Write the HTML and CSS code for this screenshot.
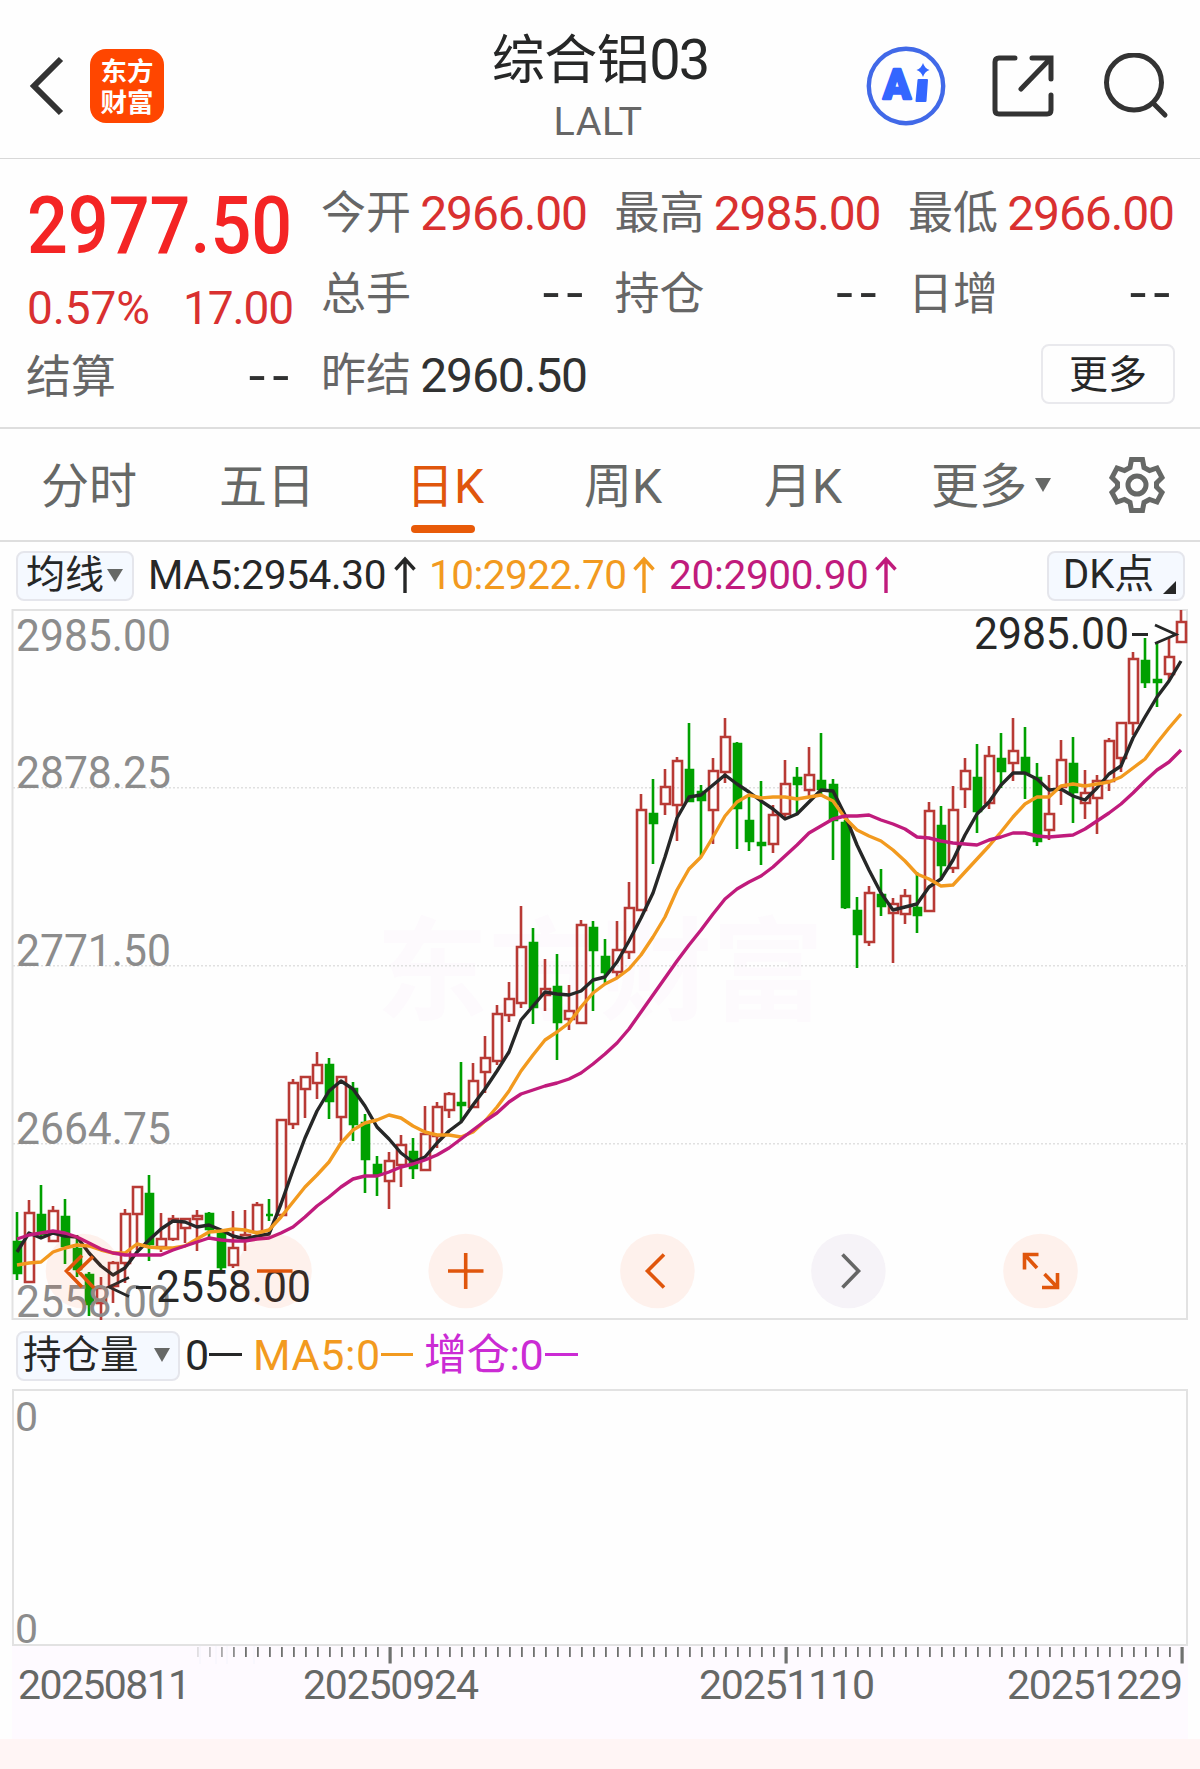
FILE: index.html
```html
<!DOCTYPE html>
<html lang="zh-CN">
<head>
<meta charset="utf-8">
<title>综合铝03</title>
<link rel="stylesheet" href="styles.css">
</head>
<body>
<header class="header">
  <div class="header-left">
    <svg class="back" width="40" height="66" viewBox="0 0 40 66"><path d="M35 6 8 33 35 60"/></svg>
    <div class="logo"><span>东方</span><span>财富</span></div>
  </div>
  <div class="title">
    <h1>综合铝<span class="num">03</span></h1>
    <p>LALT</p>
  </div>
  <div class="header-right">
    <svg class="ai" width="80" height="80" viewBox="0 0 80 80">
      <circle cx="40" cy="40" r="37.2"/>
      <text x="17" y="53" textLength="28" lengthAdjust="spacingAndGlyphs">A</text>
      <path d="M52.500 34H61L59.500 55H50.500Z"/>
      <path class="spark" d="M57 17Q58.700 22.300 63.500 24Q58.700 25.700 57 31Q55.300 25.700 50.500 24Q55.300 22.300 57 17Z"/>
    </svg>
    <svg class="line-icon" width="64" height="64" viewBox="0 0 64 64"><path d="M24 4H8Q4 4 4 8V56Q4 60 8 60H56Q60 60 60 56V41M41 4H60V25M59 5 30 35"/></svg>
    <svg class="line-icon" width="66" height="66" viewBox="0 0 66 66"><circle cx="30" cy="29.500" r="27.500"/><path d="M49 50 61 62"/></svg>
  </div>
</header>

<section class="quote">
  <div class="price">
    <strong>2977.50</strong>
    <div class="change"><span class="pct">0.57%</span><span>17.00</span></div>
    <div class="cell"><label>结算</label><i>--</i></div>
  </div>
  <div class="facts">
    <div class="cell"><label>今开</label><b>2966.00</b></div>
    <div class="cell"><label>最高</label><b>2985.00</b></div>
    <div class="cell"><label>最低</label><b>2966.00</b></div>
    <div class="cell"><label>总手</label><i>--</i></div>
    <div class="cell"><label>持仓</label><i>--</i></div>
    <div class="cell"><label>日增</label><i>--</i></div>
    <div class="cell"><label>昨结</label><b class="dark">2960.50</b></div>
    <button class="more">更多</button>
  </div>
</section>

<nav class="tabs">
  <span class="tab t1">分时</span>
  <span class="tab t2">五日</span>
  <span class="tab t3 active">日K</span>
  <span class="tab t4">周K</span>
  <span class="tab t5">月K</span>
  <span class="tab t6">更多<svg width="16" height="14" viewBox="0 0 16 14"><path d="M0 0H16L8 14Z"/></svg></span>
  <svg class="gear" width="58" height="58" viewBox="0 0 58 58">
    <path d="M23.500 3.500H34.500L36 11.500L41.500 14.500L49 12L54 21.500L48.500 27V31L54 36.500L49 46L41.500 43.500L36 46.500L34.500 54.500H23.500L22 46.500L16.500 43.500L9 46L4 36.500L9.500 31V27L4 21.500L9 12L16.500 14.500L22 11.500Z"/>
    <circle cx="29" cy="29" r="9"/>
  </svg>
</nav>

<div class="legend ma">
  <span class="chip chip-ma">均线<svg width="16" height="13" viewBox="0 0 16 13"><path d="M0 0H16L8 13Z"/></svg></span>
  <span class="m m5">MA5:2954.30<svg class="up" width="22" height="38" viewBox="0 0 22 38"><path d="M11 37V3M1.500 13.500 11 3 20.500 13.500"/></svg></span>
  <span class="m m10">10:2922.70<svg class="up" width="22" height="38" viewBox="0 0 22 38"><path d="M11 37V3M1.500 13.500 11 3 20.500 13.500"/></svg></span>
  <span class="m m20">20:2900.90<svg class="up" width="22" height="38" viewBox="0 0 22 38"><path d="M11 37V3M1.500 13.500 11 3 20.500 13.500"/></svg></span>
  <span class="chip chip-dk">DK点<svg width="13" height="13" viewBox="0 0 13 13"><path d="M13 0V13H0Z"/></svg></span>
</div>

<svg class="chart" id="kline" width="1200" height="711" viewBox="0 609 1200 711">
  <text class="watermark" x="376" y="1012" textLength="448">东方财富</text>
  <path class="grid" d="M13 787.700H1187M13 965.700H1187M13 1143.700H1187"/>
  <path class="frame" d="M12.500 610H1187V1319H12.500Z"/>
  <g id="candles"></g>
  <g class="scale">
    <text x="16" y="651" textLength="155" lengthAdjust="spacingAndGlyphs">2985.00</text>
    <text x="16" y="788" textLength="155" lengthAdjust="spacingAndGlyphs">2878.25</text>
    <text x="16" y="966" textLength="155" lengthAdjust="spacingAndGlyphs">2771.50</text>
    <text x="16" y="1144" textLength="155" lengthAdjust="spacingAndGlyphs">2664.75</text>
    <text x="16" y="1317" textLength="155" lengthAdjust="spacingAndGlyphs">2558.00</text>
  </g>
  <g id="averages"></g>
  <g class="mark">
    <text x="974" y="648.500" textLength="155" lengthAdjust="spacingAndGlyphs">2985.00</text>
    <path d="M1132 634.500H1148M1155 625 1176 634.500 1155 643.500"/>
    <text x="156" y="1301.500" textLength="155" lengthAdjust="spacingAndGlyphs">2558.00</text>
    <path d="M136 1287.500H151M129 1277.500 109 1287 129 1296.500"/>
  </g>
  <g class="controls">
    <circle cx="83" cy="1271" r="37.300"/><circle cx="274.500" cy="1271" r="37.300"/><circle cx="465.700" cy="1271" r="37.300"/>
    <circle cx="657.400" cy="1271" r="37.300"/><circle class="off" cx="848.400" cy="1271" r="37.300"/><circle cx="1040.500" cy="1271" r="37.300"/>
    <path d="M82 1255.500 66.500 1271 82 1287M93 1256.500 78 1271 94 1288M257 1271H292.500M448 1271H483.500M465.700 1253V1289M664 1254.500 647.500 1271 664 1287.500"/>
    <path class="off" d="M842.500 1254.500 858.500 1271 842.500 1287.500"/>
    <path d="M1038.500 1254.500H1024.500V1269.500M1025 1255 1037 1268M1042 1287.500H1057.500V1273M1057 1287 1044.500 1274"/>
  </g>
</svg>

<div class="legend pos">
  <span class="chip chip-pos">持仓量<svg width="16" height="14" viewBox="0 0 16 14"><path d="M0 0H16L8 14Z"/></svg></span>
  <span class="p p0">0<s></s></span>
  <span class="p p5">MA5:0<s></s></span>
  <span class="p pz">增仓:0<s></s></span>
</div>

<div class="volume"><span>0</span><span>0</span></div>

<div class="axis">
  <svg class="ticks" id="ticks" width="1176" height="18" viewBox="12 1646 1176 18"></svg>
  <div class="dates"><span>20250811</span><span>20250924</span><span>20251110</span><span>20251229</span></div>
</div>
<script src="chart.js"></script>
</body>
</html>
```
FILE: styles.css
```css
* { box-sizing: border-box; }
body {
  margin: 0;
  width: 1200px;
  height: 1769px;
  overflow: hidden;
  display: flex;
  flex-direction: column;
  background: #fff5f5;
  color: #262727;
  font-family: Roboto, "Noto Sans CJK SC", sans-serif;
}
body > * { flex: none; background: #fefefe; }
svg { display: block; fill: none; }
h1, p { margin: 0; font-weight: 400; }

.header {
  height: 159px;
  border-bottom: 1px solid #d8d8d8;
  display: grid;
  grid-template-columns: 400px 1fr 400px;
}
.header-left { display: flex; align-items: center; padding: 14px 0 0 26px; }
.back path { stroke: #333; stroke-width: 6; }
.logo {
  margin-left: 24px;
  width: 74px;
  height: 74px;
  border-radius: 16px;
  background: #ff4600;
  color: #fff;
  font: 700 26.5px/31px "Noto Sans CJK SC", sans-serif;
  text-align: center;
  padding-top: 5px;
  display: flex;
  flex-direction: column;
}
.title { text-align: center; }
h1 { font-size: 53px; line-height: 72px; padding-top: 24px; letter-spacing: -0.5px; }
h1 .num { font-size: 56px; letter-spacing: -2px; }
.title p { font-size: 39.5px; line-height: 46px; margin-top: 2px; color: #666; letter-spacing: 0.5px; padding-right: 4px; }
.header-right { display: flex; align-items: center; padding: 14px 0 0 66px; }
.ai circle { stroke: #4169e8; stroke-width: 4.4; }
.ai text { font: 900 43px Roboto, sans-serif; fill: #3366ff; stroke: #3366ff; stroke-width: 2.4; stroke-linejoin: round; }
.ai path { fill: #3366ff; stroke: #3366ff; stroke-width: 2; stroke-linejoin: round; }
.ai .spark { stroke-width: 0; }
.line-icon path, .line-icon circle { stroke: #333; stroke-width: 5; stroke-linecap: round; }
.line-icon { margin-left: 45px; }
.line-icon + .line-icon { margin-left: 49px; }

.quote { height: 270px; border-bottom: 2px solid #dedede; display: flex; padding-top: 13px; }
.price { width: 322px; padding: 0 32px 0 27px; }
.price strong {
  display: block;
  font-size: 79px;
  font-weight: 500;
  line-height: 108px;
  color: #f42424;
  transform: scaleX(0.91);
  transform-origin: 0 50%;
}
.change { display: flex; justify-content: space-between; font-size: 46px; line-height: 56px; color: #d93030; letter-spacing: -1.1px; }
.change span { margin-right: -1px; }
.change .pct { letter-spacing: -0.1px; }
.price .cell { height: 80px; }
.facts {
  width: 851px;
  display: grid;
  grid-template-columns: repeat(3, 264px);
  grid-auto-rows: 81px;
  column-gap: 29.5px;
}
.cell { display: flex; justify-content: space-between; align-items: center; line-height: 60px; padding-top: 2px; }
.cell label { font-size: 45px; color: #666; padding-top: 1px; margin-left: -1px; }
.cell b { font-size: 48px; font-weight: 400; color: #d93030; letter-spacing: -1.1px; margin-right: -1px; }
.cell .dark { color: #303131; }
.cell i { font: 56px/48px "Noto Sans CJK SC", sans-serif; letter-spacing: 4.5px; margin: -15px -3px 0 0; color: #303131; }
.price .cell, .price .change { width: 265px; }
.more {
  grid-column: 3;
  justify-self: end;
  margin: 10px -2px 0 0;
  width: 134px;
  height: 60px;
  border: 2px solid #e9e9ed;
  border-radius: 8px;
  background: #fefefe;
  color: #262727;
  font: 39px/50px "Noto Sans CJK SC", sans-serif;
  padding: 0 0 7px;
}

.tabs { height: 113px; border-bottom: 2px solid #dedede; display: flex; padding-left: 41px; color: #666866; }
.tab { font-size: 48px; line-height: 116px; height: 104px; white-space: nowrap; display: flex; }
.t1, .t2 { width: 178px; }
.t3 { width: 64px; margin-left: 14px; margin-right: 109px; flex-direction: column; text-indent: -5px; }
.t4 { width: 180px; }
.t5 { width: 167px; }
.t6 { width: 177px; }
.active { color: #e0560c; height: 104px; }
.active::after { content: ""; width: 64px; height: 8px; margin-top: -20px; border-radius: 4px; background: #e85a08; }
.t6 svg { margin: 49px 0 0 8px; }
.t6 path, .chip path { fill: #666866; }
.gear { margin-top: 27px; }
.gear path, .gear circle { stroke: #666866; stroke-width: 5; }

.legend { display: flex; align-items: center; }
.ma { height: 67px; padding: 0 16px; }
.pos { height: 69px; padding: 2px 16px 0; }
.chip {
  height: 50px;
  border: 2px solid #e5e6ec;
  border-radius: 8px;
  background: #f5f9ff;
  font-size: 39px;
  line-height: 44px;
  display: flex;
  align-items: center;
  padding-bottom: 1px;
}
.chip-ma { width: 118px; padding-left: 8px; }
.chip-ma svg { margin-left: 3px; }
.chip-dk { width: 138px; padding-left: 14px; margin-right: -1px; margin-left: auto; font-size: 40px; }
.chip-dk svg { margin: 24px 0 0 9px; }
.chip-dk path { fill: #262727; }
.chip-pos { width: 164px; padding-left: 5px; font-size: 38.5px; }
.chip-pos svg { margin-left: 15px; }
.m { font-size: 40.5px; line-height: 48px; margin-top: -2px; display: flex; align-items: center; justify-content: space-between; }
.m5 { width: 268px; margin-left: 14px; letter-spacing: -0.35px; }
.m10 { width: 226px; margin-left: 13px; color: #f29a1f; letter-spacing: -0.5px; }
.m20 { width: 228px; margin-left: 14px; color: #c01b7c; letter-spacing: -0.3px; }
.up path { stroke: currentColor; stroke-width: 3.4; }

.scale text, .mark text { font: 44px Roboto, sans-serif; }
.scale text { fill: #8c8c8c; }
.mark text { fill: #262727; }
.mark path { stroke: #262727; stroke-width: 2.8; }
.watermark { font: 700 112px "Noto Sans CJK SC", sans-serif; fill: #fdfafd; }
.grid { stroke: #e0e0e0; stroke-width: 1.4; stroke-dasharray: 2 2; }
.frame { stroke: #e2e2e2; stroke-width: 2; }
.up-bar { stroke: #b83a35; stroke-width: 2.6; }
.down-bar { stroke: #00a000; stroke-width: 2.6; fill: #00a000; }
.line5, .line10, .line20 { stroke-width: 3.4; stroke-linejoin: round; }
.line5 { stroke: #262727; }
.line10 { stroke: #f29a1f; }
.line20 { stroke: #c01b7c; }
.controls circle { fill: rgba(255, 92, 30, 0.08); }
.controls circle.off { fill: #f6f3f8; }
.controls path { stroke: #e0560c; stroke-width: 3.6; }
.controls path.off { stroke: #666; }

.p { font-size: 43px; line-height: 50px; height: 50px; margin-top: -2px; display: flex; align-items: center; white-space: nowrap; }
.p s { width: 33px; height: 3px; background: currentColor; margin-left: auto; }
.p0 { width: 57px; margin-left: 5px; }
.p5 { width: 160px; margin-left: 11px; color: #f29a1f; letter-spacing: 0.6px; }
.pz { width: 154px; margin-left: 11px; color: #cb2bd4; letter-spacing: -0.3px; }

.volume {
  width: 1176px;
  height: 257px;
  margin: 0 12px;
  border: 2px solid #e2e2e2;
  padding-left: 2px;
  display: flex;
  flex-direction: column;
  justify-content: space-between;
  font-size: 41px;
  line-height: 52px;
  color: #8c8c8c;
  box-shadow: -12px 0 #fefefe, 12px 0 #fefefe;
}
.volume span { letter-spacing: -1px; margin-left: -1px; }
.volume span:last-child { line-height: 30px; }
.axis {
  height: 93px;
  width: 1200px;
  border: solid #fefefe;
  border-width: 0 12px;
  background: #fefaff;
}
.ticks rect { fill: #6f716f; }
.dates {
  display: grid;
  grid-template-columns: 285px 396px 308px 180px;
  padding: 0 0 0 6px;
  font-size: 41px;
  line-height: 42px;
  letter-spacing: -1.2px;
  color: #666866;
}
.dates span:first-child { letter-spacing: -1.6px; }
```
FILE: chart.js
```js
// Each candle: direction, high, body top, body bottom, low (chart units).
const candles = `g1212,1241,1274,1280 r1200,1213,1282,1282 g1185,1214,1235,1237 r1206,1211,1241,1241 g1199,1216,1247,1264
g1235,1248,1270,1277 g1272,1274,1305,1316 r1277,1288,1303,1321 r1261,1263,1286,1303 r1209,1214,1263,1283
r1186,1187,1214,1250 g1175,1193,1245,1261 r1213,1239,1247,1252 r1215,1219,1239,1241 r1218,1219,1228,1243
r1210,1216,1219,1251 g1212,1213,1230,1237 g1230,1232,1268,1271 r1211,1248,1265,1268 r1210,1235,1238,1251
r1202,1205,1232,1232 g1199,1214,1216,1221 r1120,1120,1215,1215 r1079,1083,1124,1129 r1077,1077,1089,1118
r1052,1065,1083,1099 g1058,1064,1102,1119 r1077,1077,1117,1141 g1082,1088,1125,1141 g1114,1122,1160,1193
g1156,1164,1175,1196 r1152,1161,1181,1209 r1135,1145,1165,1187 g1138,1151,1169,1179 r1106,1134,1170,1170
r1102,1107,1136,1148 r1092,1094,1110,1118 g1062,1102,1106,1122 r1063,1081,1107,1107 r1036,1058,1072,1093
r1005,1014,1061,1065 r982,999,1015,1022 r906,947,1003,1008 g928,942,1008,1024 r959,989,995,1011
g954,986,1023,1060 r985,1011,1019,1030 r920,925,1023,1024 g921,927,951,1011 g939,956,973,983
r921,950,972,977 r882,908,952,959 r794,810,910,910 g779,813,824,864 r769,787,804,815
r757,761,805,841 g723,769,802,802 g785,791,801,856 r758,771,810,844 r718,737,772,783
g742,743,809,849 g796,820,842,851 g781,842,846,865 r805,815,844,853 r760,784,814,818
g767,777,785,815 r747,775,790,798 g733,780,790,795 g779,784,821,860 g820,822,908,909
g897,910,935,968 r886,893,942,946 g869,894,907,916 r898,904,913,963 r889,896,914,924
g872,907,916,933 r802,811,911,912 g806,825,866,880 r786,810,868,873 r758,771,789,808
g744,777,812,833 r746,756,803,809 g733,758,772,788 r718,751,763,781 g727,757,774,799
g763,777,842,846 r775,814,830,840 r740,760,787,805 g737,763,793,823 r770,793,803,819
r775,781,798,834 r738,741,781,791 r722,723,758,772 r652,659,723,735 g638,660,683,688
g643,679,683,707 r637,657,674,680 r610,622,642,642`.split(/\s+/);

const averages = {
  line5: [1252,1233,1238,1233,1236,1237,1253,1266,1275,1268,1252,1240,1229,1221,1222,1227,1225,1230,1236,1239,1236,1234,1204,1170,1138,1111,1091,1081,1089,1106,1127,1139,1153,1162,1157,1143,1131,1122,1105,1089,1071,1052,1020,1006,992,994,995,991,980,977,962,941,918,893,857,818,797,795,785,775,784,792,801,809,819,814,802,790,791,815,845,870,893,910,907,904,887,879,860,835,814,802,785,773,773,779,790,789,796,800,788,774,766,738,717,697,681,661],
  line10: [1265,1263,1262,1252,1248,1245,1246,1250,1253,1253,1244,1247,1248,1248,1246,1239,1232,1231,1229,1230,1233,1230,1217,1202,1187,1175,1162,1143,1130,1123,1120,1115,1118,1126,1132,1135,1135,1137,1132,1121,1107,1091,1071,1055,1040,1032,1023,1007,993,984,978,969,955,937,917,890,869,857,837,816,802,795,798,797,797,799,797,795,801,818,830,836,841,850,861,874,879,886,885,872,859,846,832,817,804,797,797,786,784,786,784,782,777,768,759,743,728,714],
  line20: [1239,1235,1233,1231,1233,1237,1243,1249,1253,1255,1255,1255,1255,1250,1246,1242,1238,1240,1241,1241,1239,1238,1233,1227,1217,1206,1197,1187,1179,1176,1176,1172,1167,1164,1160,1155,1148,1139,1130,1121,1113,1102,1094,1090,1086,1083,1079,1073,1064,1054,1043,1029,1012,995,978,961,945,930,914,899,889,882,876,867,856,845,833,826,819,816,816,815,820,824,829,837,838,841,843,844,845,840,837,833,833,836,837,836,835,829,821,813,804,793,781,770,762,750]
};

const step = 12, first = 17;
document.getElementById('candles').innerHTML = candles.map((c, i) => {
  const [high, top, bottom, low] = c.slice(1).split(',').map(Number);
  const x = first + i * step;
  const wicks = `M${x} ${high}V${top}M${x} ${bottom}V${low}`;
  return c[0] === 'r'
    ? `<path class="up-bar" d="${wicks}M${x - 4} ${top}H${x + 5}V${bottom}H${x - 4}Z"/>`
    : `<path class="down-bar" d="${wicks}M${x - 3} ${top + 1}H${x + 4}V${bottom - 1}H${x - 3}Z"/>`;
}).join('');

document.getElementById('averages').innerHTML = ['line5', 'line10', 'line20'].map(name =>
  `<polyline class="${name}" points="${averages[name].map((y, i) => `${first + i * step},${y}`).join(' ')}"/>`
).join('');

const long = [31, 64, 97];
let marks = '';
for (const x of [200, 216, 227, 254]) marks += `<path stroke="#f4f4fc" d="M${x} 1646V1664"/>`;
for (let i = 15; i <= 97; i++) {
  const big = long.includes(i);
  const x = 18 + i * step;
  marks += `<rect x="${x - (big ? 1.5 : 1)}" y="1647" width="${big ? 3.2 : 1.8}" height="${big ? 16.500 : 10}" opacity="${Math.min(1, (i - 14) / 5)}"/>`;
}
document.getElementById('ticks').innerHTML = marks;
```
